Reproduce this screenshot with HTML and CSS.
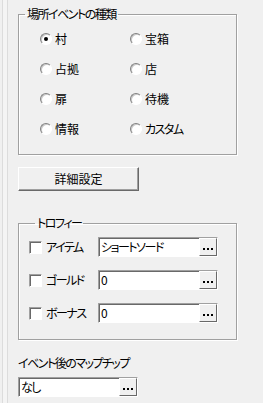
FILE: index.html
```html
<!DOCTYPE html>
<html>
<head>
    <title>場所イベント</title>
    <meta charset="utf-8">
    <link rel="stylesheet" href="styles.css">
</head>
<body>
  <div class="window">
    <div class="rail"></div>
    <div class="content">

      <fieldset class="group kinds">
        <legend>場所イベントの種類</legend>
        <div class="radios">
          <div class="opt"><span class="radio on"></span>村</div>
          <div class="opt"><span class="radio"></span>宝箱</div>
          <div class="opt"><span class="radio"></span>占拠</div>
          <div class="opt"><span class="radio"></span>店</div>
          <div class="opt"><span class="radio"></span>扉</div>
          <div class="opt"><span class="radio"></span>待機</div>
          <div class="opt"><span class="radio"></span>情報</div>
          <div class="opt"><span class="radio"></span><span class="kana">カスタム</span></div>
        </div>
      </fieldset>

      <div class="btn">詳細設定</div>

      <fieldset class="group trophy">
        <legend>トロフィー</legend>
        <div class="row">
          <span class="check"></span>
          <span class="lbl">アイテム</span>
          <div class="field"><span class="val">ショートソード</span><span class="more"><i></i><i></i><i></i></span></div>
        </div>
        <div class="row">
          <span class="check"></span>
          <span class="lbl">ゴールド</span>
          <div class="field"><span class="val">0</span><span class="more"><i></i><i></i><i></i></span></div>
        </div>
        <div class="row">
          <span class="check"></span>
          <span class="lbl">ボーナス</span>
          <div class="field"><span class="val">0</span><span class="more"><i></i><i></i><i></i></span></div>
        </div>
      </fieldset>

      <div class="caption">イベント後のマップチップ</div>
      <div class="field">
        <span class="val">なし</span><span class="more"><i></i><i></i><i></i></span>
      </div>

    </div>
  </div>
</body>
</html>
```

FILE: styles.css
```css
html, body {
    margin: 0;
    padding: 0;
    background-color: #f0f0f0;
}

body {
    font-family: "Noto Sans CJK JP", "Noto Sans", sans-serif;
    font-size: 12px;
    line-height: 14px;
    color: #000;
    height: 403px;
    overflow: hidden;
}

/* katakana is much narrower in the original UI font */
.kana, .lbl, .val, .caption {
    font-feature-settings: "palt" 1;
    letter-spacing: -1.5px;
}

.window {
    display: flex;
    height: 403px;
}

.rail {
    width: 4px;
    margin-left: 2px;
    border-left: 1px solid #dcdcdc;
    border-right: 1px solid #dcdcdc;
    background-color: #f4f4f4;
}

.content {
    padding-left: 10px;
    width: 220px;
}

/* group boxes */
.group {
    box-sizing: border-box;
    width: 219px;
    margin: 7px 0 0 0;
    padding: 0;
    border: 1px solid #a0a0a0;
    box-shadow: 1px 1px 0 #fff, inset 1px 1px 0 #fff;
    min-inline-size: 0;
}

.group legend {
    margin-left: 6px;
    padding: 0 2px;
    line-height: 14px;
    font-feature-settings: "palt" 1;
    letter-spacing: -1.5px;
}

.radios {
    display: grid;
    grid-template-columns: 90px 90px;
    grid-auto-rows: 30px;
    padding: 3px 0 10px 21px;
}

.opt {
    display: flex;
    align-items: center;
    gap: 3px;
}

.radio {
    box-sizing: border-box;
    width: 12px;
    height: 12px;
    border-radius: 50%;
    border: 1px solid;
    border-color: #808080 #fff #fff #808080;
    background-color: #fff;
    box-shadow: inset 1px 1px 0 #c8c8c8;
    position: relative;
}

.radio.on::after {
    content: "";
    position: absolute;
    left: 3px;
    top: 3px;
    width: 4px;
    height: 4px;
    border-radius: 50%;
    background-color: #000;
}

/* push button */
.btn {
    box-sizing: border-box;
    width: 121px;
    height: 24px;
    margin-top: 12px;
    border: 1px solid;
    border-color: #fff #696969 #696969 #fff;
    box-shadow: inset -1px -1px 0 #a0a0a0;
    text-align: center;
    line-height: 21px;
}

.trophy {
    margin-top: 25px;
    padding: 7px 0 16px 10px;
}

.row {
    display: flex;
    align-items: center;
    height: 20px;
}

.row + .row {
    margin-top: 13px;
}

.check {
    box-sizing: border-box;
    width: 13px;
    height: 13px;
    margin-right: 4px;
    border: 1px solid;
    border-color: #a0a0a0 #fff #fff #a0a0a0;
    background-color: #fff;
    box-shadow: inset 1px 1px 0 #696969;
}

.lbl {
    width: 52px;
}

/* text box with browse button */
.field {
    box-sizing: border-box;
    display: flex;
    width: 120px;
    height: 20px;
    border: 1px solid;
    border-color: #a0a0a0 #fff #fff #a0a0a0;
    box-shadow: inset 1px 1px 0 #696969;
    background-color: #fff;
}

.val {
    flex: 1;
    padding: 2px 0 0 2px;
    line-height: 14px;
}

.more {
    box-sizing: border-box;
    width: 18px;
    height: 18px;
    border: 1px solid;
    border-color: #fff #696969 #696969 #fff;
    background-color: #f0f0f0;
    display: flex;
    justify-content: center;
    align-items: flex-end;
    gap: 2px;
    padding-bottom: 5px;
}

.more i {
    width: 2px;
    height: 2px;
    background-color: #000;
}

.caption {
    margin-top: 16px;
}

.content > .field {
    margin-top: 7px;
}
```
